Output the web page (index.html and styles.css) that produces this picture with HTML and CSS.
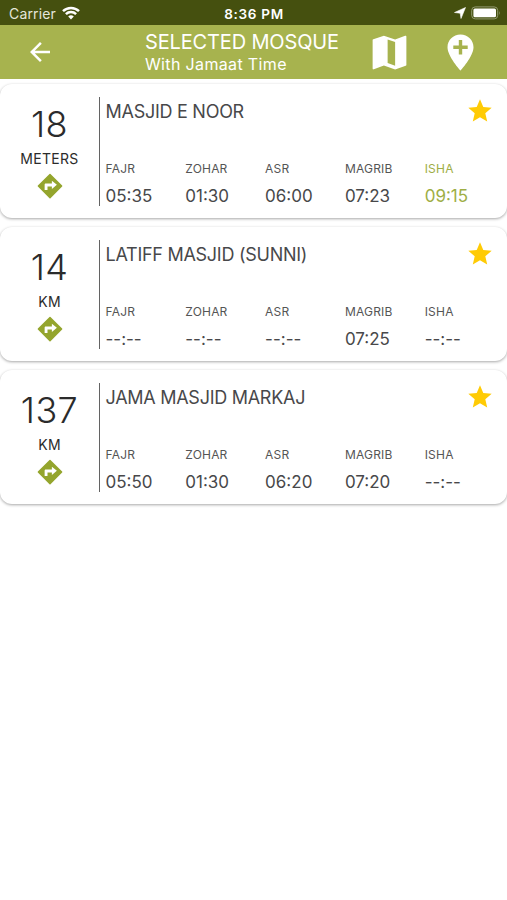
FILE: index.html
```html
<!DOCTYPE html>
<html lang="en">
<head>
<meta charset="utf-8">
<title>Selected Mosque</title>
<link rel="stylesheet" href="styles.css">
</head>
<body>
<svg class="defs" width="0" height="0" aria-hidden="true">
  <symbol id="star" viewBox="0 0 24 24"><path d="M12 17.27 18.18 21l-1.64-7.03L22 9.24l-7.19-.61L12 2 9.19 8.63 2 9.24l5.46 4.73L5.82 21z"/></symbol>
  <symbol id="route" viewBox="0 0 24 24"><path d="m21.71 11.6-9.3-9.300a.6.6 0 0 0-.82 0l-9.300 9.300a.6.6 0 0 0 0 .82l9.300 9.300a.6.6 0 0 0 .82 0l9.300-9.300a.6.6 0 0 0 0-.82zM13.500 14.300V12.300H10v2.900H7.700v-4.200c0-.6.400-1 1-1h4.800V7.700l4 3.300z"/></symbol>
</svg>
<div class="status">
  <div class="carrier"><span>Carrier</span>
    <svg width="18" height="14" viewBox="0 0 18 14" fill="none" stroke="#fff" stroke-width="2.5"><path d="M1 5.2a11.5 11.5 0 0 1 16 0M3.9 8.2a7.3 7.3 0 0 1 10.2 0"/><path d="M9 13.5 6.2 10.6a4 4 0 0 1 5.6 0z" fill="#fff" stroke="none"/></svg>
  </div>
  <div class="clock">8:36 PM</div>
  <div class="indicators">
    <svg width="12" height="12" viewBox="0 0 12 12" fill="#fff" stroke="#fff" stroke-width=".6"><path d="M11.5.5 7 11.500 6.200 6.200.500 5.500z"/></svg>
    <svg width="30" height="14" viewBox="0 0 30 14"><rect x=".7" y=".9" width="26" height="12" rx="3.5" fill="none" stroke="#929a70"/><rect x="2.400" y="2.600" width="22.600" height="8.600" rx="1.500" fill="#fff"/><path d="M28 5q1.500 2 0 4z" fill="#929a70"/></svg>
  </div>
</div>
<header class="bar">
  <svg class="back" width="30" height="30" viewBox="0 0 24 24" fill="#fff"><path d="M20 11H7.830l5.590-5.590L12 4l-8 8 8 8 1.410-1.410L7.830 13H20z"/></svg>
  <div class="heading"><h1>SELECTED MOSQUE</h1><p>With Jamaat Time</p></div>
  <svg class="map" width="45" height="45" viewBox="0 0 24 24" fill="#fff"><path d="m20.5 3-.16.03L15 5.1 9 3 3.36 4.9c-.21.07-.36.25-.36.48V20.5c0 .28.22.5.5.5l.16-.03L9 18.900l6 2.100 5.640-1.900c.21-.07.36-.25.36-.48V3.500c0-.28-.22-.5-.5-.5zM15 19l-4-1.400V5l4 1.400z"/></svg>
  <svg class="pin" width="27" height="37" viewBox="0 0 27 37" fill="#fff"><path fill-rule="evenodd" d="M13.500.5C6.200.5.500 6.100.500 13.200c0 9.300 13 23.300 13 23.300s13-14 13-23.300C26.500 6.100 20.800.5 13.500.5zM11.800 6h3.400v5.500H20.700v3.400h-5.500v5.500h-3.400v-5.500H6.300v-3.400h5.500z"/></svg>
</header>
<main class="list">
  <article class="card">
    <div class="distance"><strong>18</strong><span>METERS</span><svg><use href="#route"/></svg></div>
    <div class="details">
      <div class="top"><h2>MASJID E NOOR</h2><svg><use href="#star"/></svg></div>
      <dl>
        <div><dt>FAJR</dt><dd>05:35</dd></div>
        <div><dt>ZOHAR</dt><dd>01:30</dd></div>
        <div><dt>ASR</dt><dd>06:00</dd></div>
        <div><dt>MAGRIB</dt><dd>07:23</dd></div>
        <div class="next"><dt>ISHA</dt><dd>09:15</dd></div>
      </dl>
    </div>
  </article>
  <article class="card">
    <div class="distance"><strong>14</strong><span>KM</span><svg><use href="#route"/></svg></div>
    <div class="details">
      <div class="top"><h2>LATIFF MASJID (SUNNI)</h2><svg><use href="#star"/></svg></div>
      <dl>
        <div><dt>FAJR</dt><dd>--:--</dd></div>
        <div><dt>ZOHAR</dt><dd>--:--</dd></div>
        <div><dt>ASR</dt><dd>--:--</dd></div>
        <div><dt>MAGRIB</dt><dd>07:25</dd></div>
        <div><dt>ISHA</dt><dd>--:--</dd></div>
      </dl>
    </div>
  </article>
  <article class="card">
    <div class="distance"><strong>137</strong><span>KM</span><svg><use href="#route"/></svg></div>
    <div class="details">
      <div class="top"><h2>JAMA MASJID MARKAJ</h2><svg><use href="#star"/></svg></div>
      <dl>
        <div><dt>FAJR</dt><dd>05:50</dd></div>
        <div><dt>ZOHAR</dt><dd>01:30</dd></div>
        <div><dt>ASR</dt><dd>06:20</dd></div>
        <div><dt>MAGRIB</dt><dd>07:20</dd></div>
        <div><dt>ISHA</dt><dd>--:--</dd></div>
      </dl>
    </div>
  </article>
</main>
</body>
</html>
```
FILE: styles.css
```css
* { box-sizing: border-box; margin: 0; padding: 0; }
body { min-height: 100vh; background: #fff; font-family: Inter, "Liberation Sans", sans-serif; color: #48484a; }
svg { display: block; flex: none; }
.defs { position: absolute; }
.status { height: 25px; background: #45500f; color: #fff; display: grid; grid-template-columns: 1fr auto 1fr; align-items: center; padding: 2px 6px 0 9px; font-size: 14px; line-height: 22px; }
.carrier { display: flex; gap: 6px; align-items: center; color: #e4e6da; letter-spacing: .15px; }
.carrier svg { margin-top: -2px; }
.clock { font-size: 13.5px; font-weight: 600; letter-spacing: .7px; margin-left: -2px; }
.indicators { display: flex; justify-content: flex-end; gap: 5px; align-items: center; }
.indicators svg { margin-top: -1px; }
.bar { height: 54px; background: #a7b34e; color: #fff; display: flex; align-items: center; padding-left: 25px; }
.heading { margin-left: 90px; width: 222px; }
h1 { font-size: 20px; line-height: 24px; font-weight: 400; letter-spacing: -.15px; white-space: nowrap; }
.heading p { font-size: 16px; line-height: 20px; letter-spacing: .35px; }
.pin { margin-left: 35px; }
.list { display: grid; gap: 9px; padding: 5px 0; }
.card { height: 134px; display: flex; border-radius: 12px; background: #fff; box-shadow: 0 1px 3px rgba(0,0,0,.35); padding: 13px 0 12px; }
.distance { width: 100px; border-right: 1.5px solid #636363; display: flex; flex-direction: column; align-items: center; color: #2b2b2b; }
.distance strong { font-size: 36px; line-height: 44px; font-weight: 350; letter-spacing: .4px; margin-top: 5px; }
.distance span { font-size: 14px; line-height: 18px; letter-spacing: .3px; margin-top: 4px; }
.distance svg { width: 30px; height: 30px; fill: #94a52d; margin-top: 3px; }
.details { flex: 1; padding-left: 5.5px; }
.top { display: flex; justify-content: space-between; height: 28px; padding-right: 13px; }
.top svg { width: 28px; height: 28px; fill: #ffcb05; }
h2 { font-size: 18px; line-height: 30px; font-weight: 400; letter-spacing: -.27px; white-space: nowrap; }
dl { display: grid; grid-template-columns: repeat(5, 79.8px); margin-top: 36px; }
dt { font-size: 12px; line-height: 16px; letter-spacing: .2px; color: #555; }
dd { font-size: 17px; line-height: 24px; margin-top: 7px; }
.next dt, .next dd { color: #9eae45; }
```
